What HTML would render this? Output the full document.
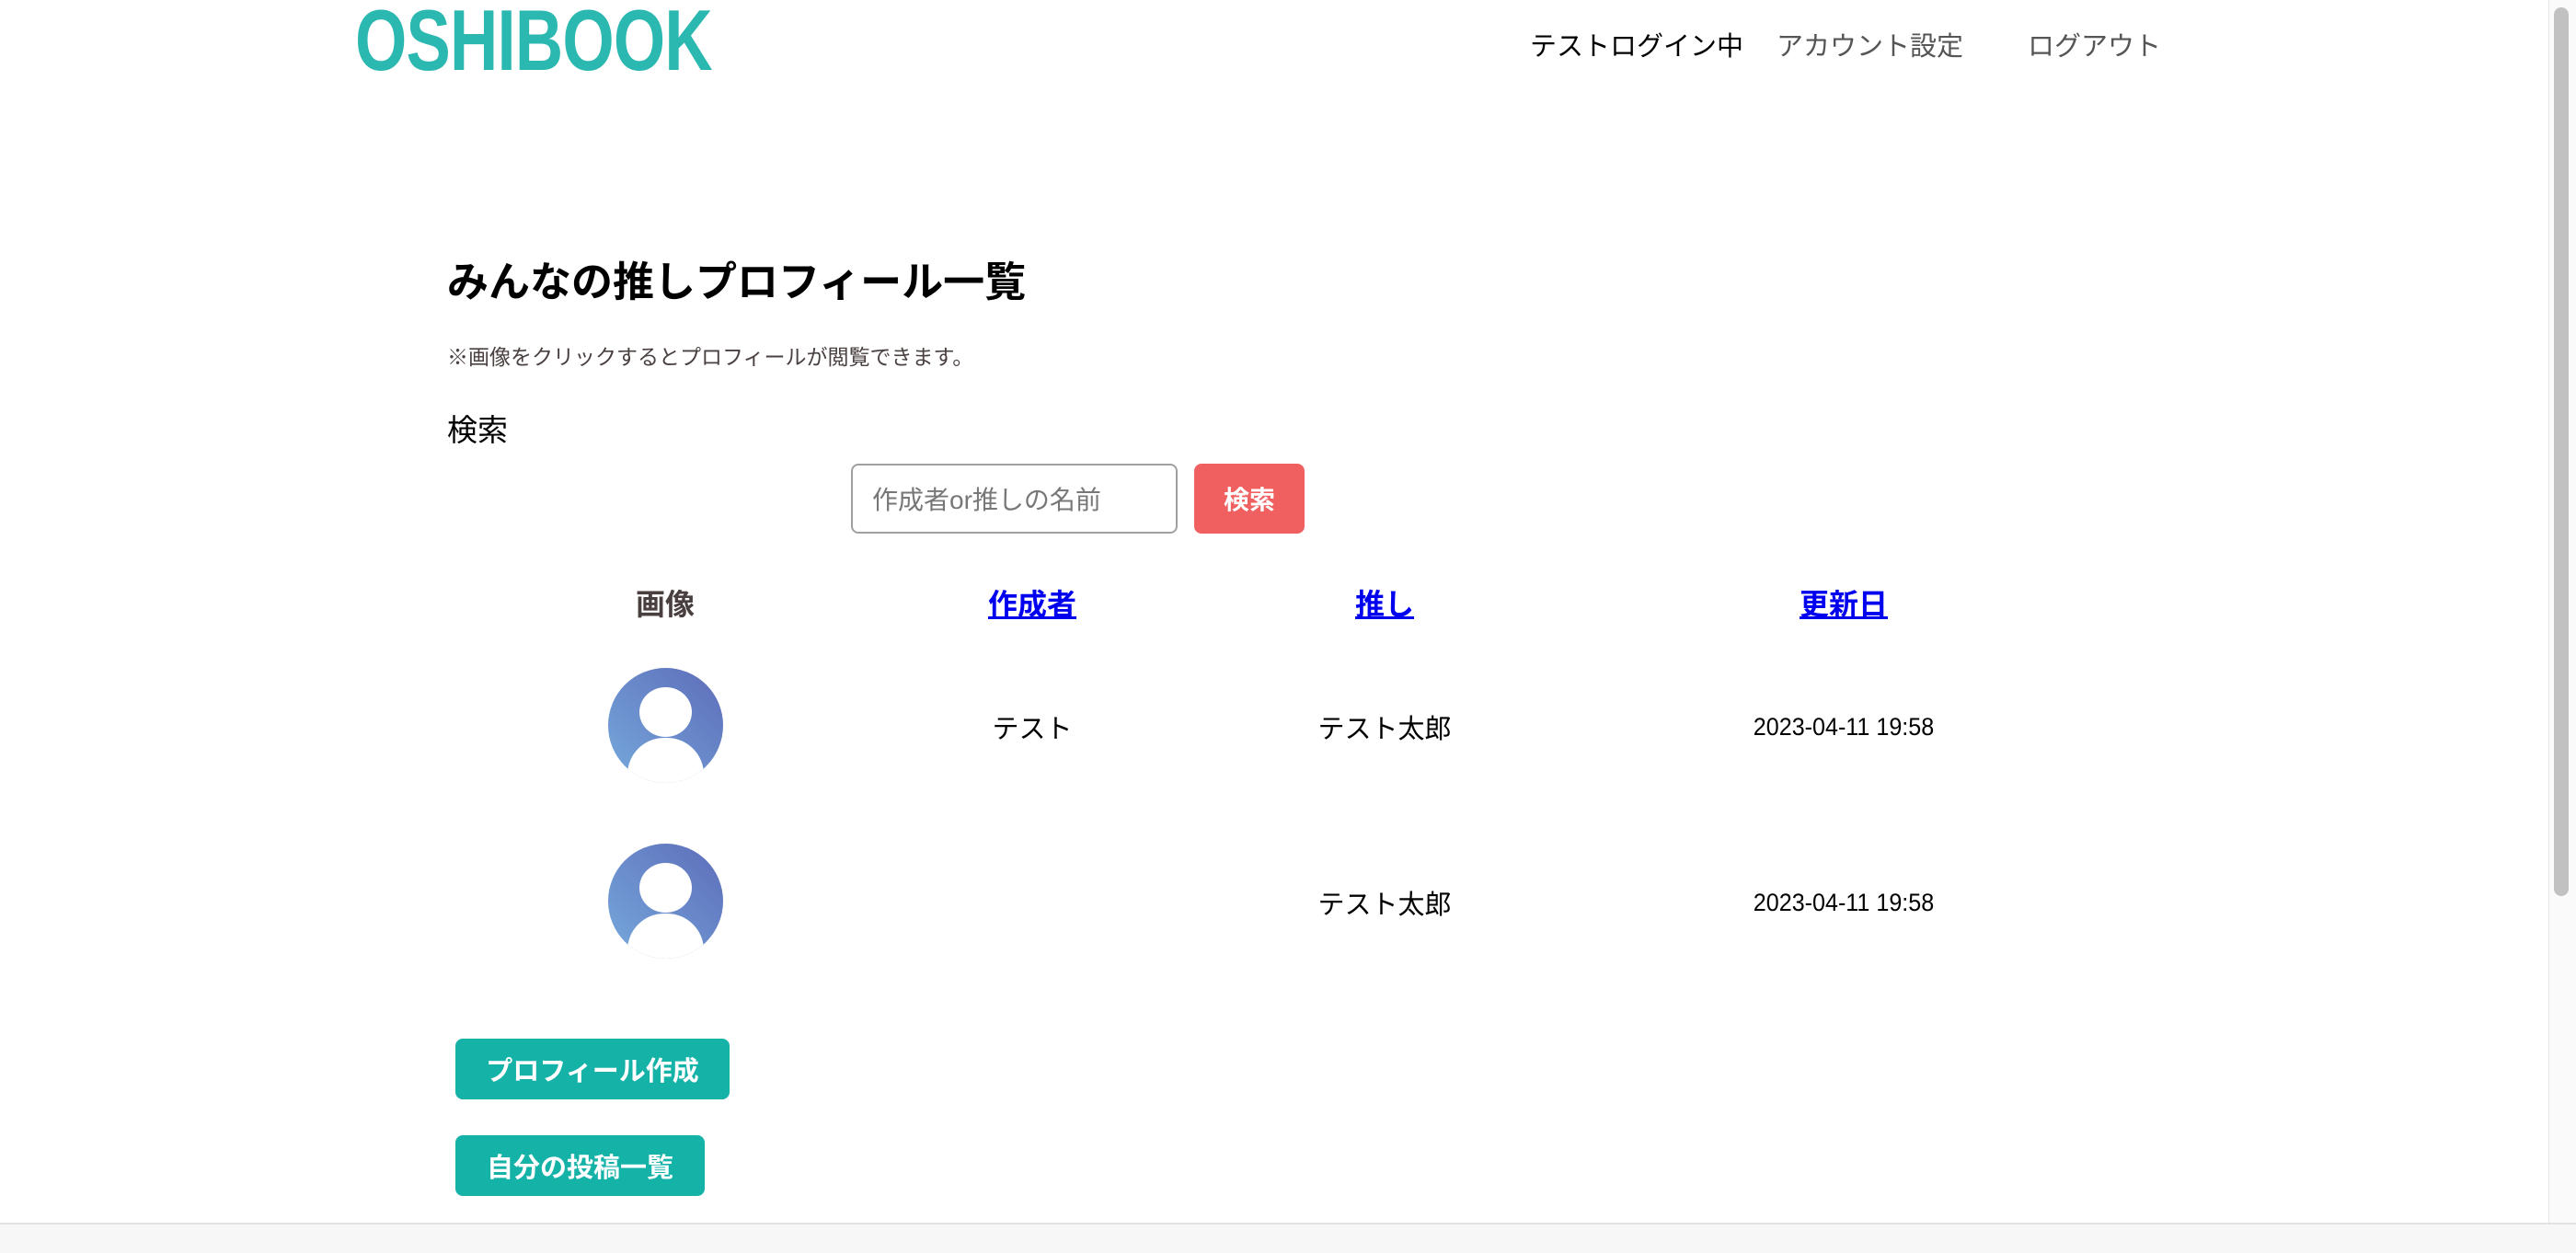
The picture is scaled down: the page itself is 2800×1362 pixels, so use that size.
<!DOCTYPE html>
<html><head><meta charset="utf-8"><style>
html,body{margin:0;padding:0;width:2800px;height:1360px;overflow:hidden;background:#fff;font-family:"Liberation Sans","Noto Sans CJK JP",sans-serif;}
.a{position:absolute;white-space:nowrap;}
.c{transform:translateX(-50%);}
.btn{position:absolute;border-radius:8px;color:#fff;font-weight:bold;display:flex;align-items:center;justify-content:center;}
.av{position:absolute;width:125px;height:125px;border-radius:50%;overflow:hidden;background:linear-gradient(45deg,#76a9dc,#5d6cb9);}
.av .h{position:absolute;left:34px;top:21px;width:57px;height:54px;border-radius:50%;background:#fff;}
.av .b{position:absolute;left:21px;top:76px;width:83px;height:80px;border-radius:40px 40px 0 0;background:#fff;}
</style></head><body>
<div class="a" style="left:386px;top:-10px;font-size:94px;font-weight:bold;color:#2bb8b0;transform:scaleX(0.77);transform-origin:0 0;letter-spacing:-1px">OSHIBOOK</div>
<div class="a" style="left:1663px;top:27px;font-size:29px;color:#000">テストログイン中</div>
<div class="a" style="left:1931px;top:27px;font-size:29px;color:#555">アカウント設定</div>
<div class="a" style="left:2204px;top:27px;font-size:29px;color:#555">ログアウト</div>
<div class="a" style="left:2770px;top:0;width:30px;height:1330px;background:#fafafa;border-left:1px solid #e6e6e6"></div>
<div class="a" style="left:2776px;top:8px;width:16px;height:966px;border-radius:8px;background:#c1c1c1"></div>
<div class="a" style="left:0;top:1329px;width:2800px;height:31px;background:#f7f7f7;border-top:2px solid #e2e2e2"></div>
<div class="a" style="left:486px;top:270px;font-size:45px;font-weight:bold;color:#000">みんなの推しプロフィール一覧</div>
<div class="a" style="left:486px;top:369px;font-size:23px;color:#4a4040">※画像をクリックするとプロフィールが閲覧できます。</div>
<div class="a" style="left:486px;top:441px;font-size:33px;color:#000">検索</div>
<div class="a" style="left:925px;top:504px;width:355px;height:76px;border:2px solid #a0a0a0;border-radius:8px;box-sizing:border-box;"></div>
<div class="a" style="left:948px;top:522px;font-size:28px;color:#777">作成者or推しの名前</div>
<div class="btn" style="left:1298px;top:504px;width:120px;height:76px;background:#f06060;font-size:28px">検索</div>
<div class="a c" style="left:723px;top:632px;font-size:32px;font-weight:bold;color:#4a3f3f">画像</div>
<div class="a c" style="left:1122px;top:632px;font-size:32px;font-weight:bold;color:#0000ee;text-decoration:underline">作成者</div>
<div class="a c" style="left:1505px;top:632px;font-size:32px;font-weight:bold;color:#0000ee;text-decoration:underline">推し</div>
<div class="a c" style="left:2004px;top:632px;font-size:32px;font-weight:bold;color:#0000ee;text-decoration:underline">更新日</div>
<div class="av" style="left:661px;top:726px"><div class="h"></div><div class="b"></div></div>
<div class="av" style="left:661px;top:917px"><div class="h"></div><div class="b"></div></div>
<div class="a c" style="left:1122px;top:769px;font-size:29px">テスト</div>
<div class="a c" style="left:1505px;top:769px;font-size:29px">テスト太郎</div>
<div class="a c" style="left:2004px;top:775px;font-size:27px;transform:translateX(-50%) scaleX(0.93)">2023-04-11 19:58</div>
<div class="a c" style="left:1505px;top:960px;font-size:29px">テスト太郎</div>
<div class="a c" style="left:2004px;top:966px;font-size:27px;transform:translateX(-50%) scaleX(0.93)">2023-04-11 19:58</div>
<div class="btn" style="left:495px;top:1129px;width:298px;height:66px;background:#15b2a8;font-size:29px">プロフィール作成</div>
<div class="btn" style="left:495px;top:1234px;width:271px;height:66px;background:#15b2a8;font-size:29px">自分の投稿一覧</div>
</body></html>
